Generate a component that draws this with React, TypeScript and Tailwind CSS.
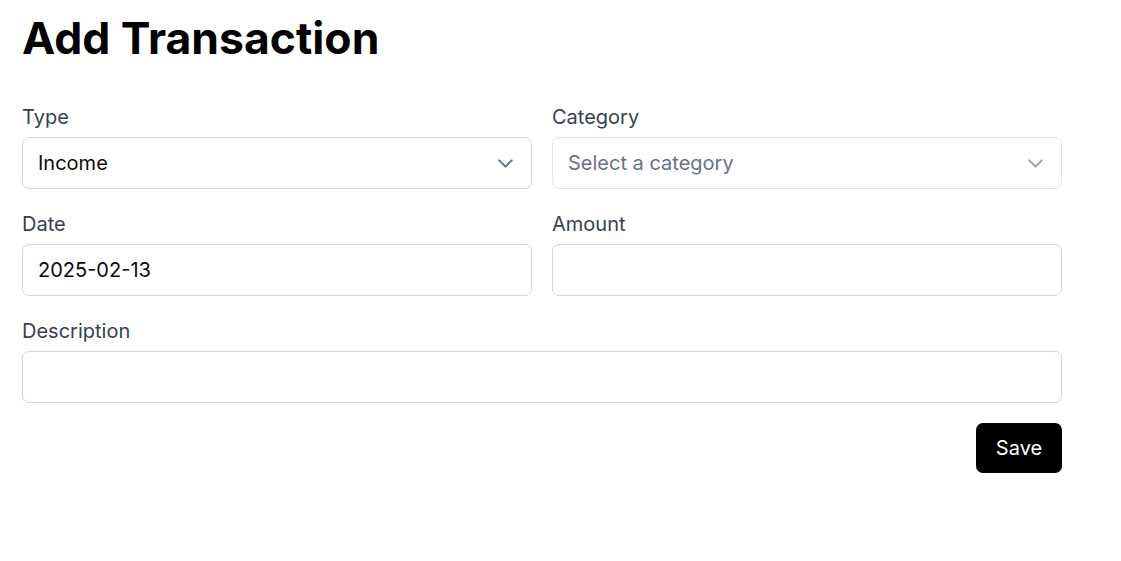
import React from "react";

function Chevron({ className }: { className: string }) {
  return (
    <svg
      width="25"
      height="25"
      viewBox="0 0 24 24"
      fill="none"
      stroke="currentColor"
      strokeWidth="2"
      strokeLinecap="round"
      strokeLinejoin="round"
      className={className}
    >
      <path d="m6 9 6 6 6-6" />
    </svg>
  );
}

function Label({ children }: { children: React.ReactNode }) {
  return (
    <div className="text-[20px] leading-[30px] text-[#374151] mb-[5px]">{children}</div>
  );
}

const boxCls =
  "h-[52px] w-full rounded-[7px] border border-[#d1d5db] bg-white flex items-center pl-[15px] text-[20px]";

export default function App() {
  return (
    <div
      className="min-h-[561px] bg-white pl-[22px] pt-[13px]"
      style={{ fontFamily: "Inter, 'Noto Sans', sans-serif" }}
    >
      <div className="w-[1040px]">
        <h1 className="text-[44.5px] leading-[50px] font-bold text-black mb-[39px]">
          Add Transaction
        </h1>
        <div className="grid grid-cols-2 gap-x-[20px] gap-y-[20px]">
          <div>
            <Label>Type</Label>
            <div className={boxCls + " justify-between pr-[13px] text-[#0a0a0a]"}>
              <span>Income</span>
              <Chevron className="text-[#64748b]" />
            </div>
          </div>
          <div>
            <Label>Category</Label>
            <div className={boxCls + " justify-between pr-[13px] border-[#e2e4e8] text-[#6b7280]"}>
              <span>Select a category</span>
              <Chevron className="text-[#9ca3af]" />
            </div>
          </div>
          <div>
            <Label>Date</Label>
            <div className={boxCls + " text-[#0a0a0a]"}>
              <span>2025-02-13</span>
            </div>
          </div>
          <div>
            <Label>Amount</Label>
            <div className={boxCls}></div>
          </div>
          <div className="col-span-2">
            <Label>Description</Label>
            <div className={boxCls}></div>
          </div>
          <div className="col-span-2 flex justify-end">
            <button className="h-[50px] w-[86px] rounded-[7px] bg-black text-white text-[20px]">
              Save
            </button>
          </div>
        </div>
      </div>
    </div>
  );
}
